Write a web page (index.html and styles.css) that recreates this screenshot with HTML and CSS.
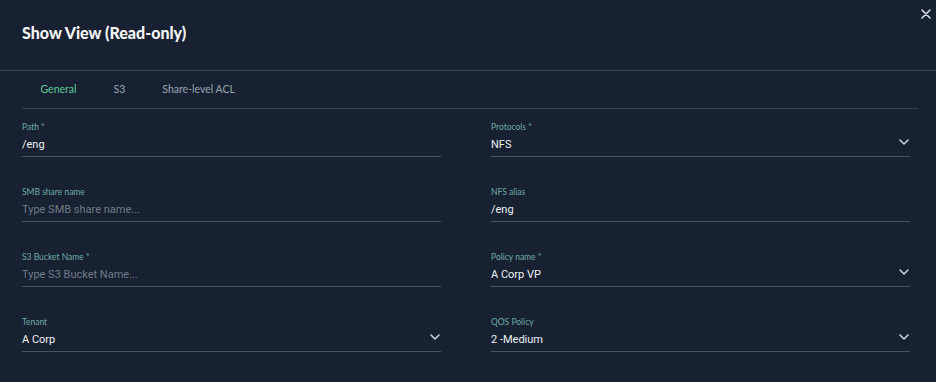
FILE: index.html
```html
<!DOCTYPE html>
<html lang="en">
<head>
    <meta charset="UTF-8">
    <meta name="viewport" content="width=device-width, initial-scale=1.0">
    <title>Show View</title>
    <link rel="stylesheet" href="styles.css">
</head>
<body>
    <div class="modal">
        <div class="modal-header">
            <h2>Show View (Read-only)</h2>
            <button class="close-btn" aria-label="Close">
                <svg width="10" height="10" viewBox="0 0 10 10"><path d="M1 1L9 9M9 1L1 9" stroke="#d6dde6" stroke-width="1.6" stroke-linecap="round"/></svg>
            </button>
        </div>

        <div class="tabs">
            <span class="tab active">General</span>
            <span class="tab">S3</span>
            <span class="tab">Share-level ACL</span>
        </div>

        <div class="form">
            <div class="field">
                <label>Path *</label>
                <div class="value">/eng</div>
            </div>
            <div class="field">
                <label>Protocols *</label>
                <div class="value select">NFS <svg class="chev" viewBox="0 0 10 6"><path d="M1 1L5 5L9 1" fill="none" stroke="#c9d1db" stroke-width="1.6" stroke-linecap="round" stroke-linejoin="round"/></svg></div>
            </div>
            <div class="field">
                <label>SMB share name</label>
                <div class="value placeholder">Type SMB share name...</div>
            </div>
            <div class="field">
                <label>NFS alias</label>
                <div class="value">/eng</div>
            </div>
            <div class="field">
                <label>S3 Bucket Name *</label>
                <div class="value placeholder">Type S3 Bucket Name...</div>
            </div>
            <div class="field">
                <label>Policy name *</label>
                <div class="value select">A Corp VP <svg class="chev" viewBox="0 0 10 6"><path d="M1 1L5 5L9 1" fill="none" stroke="#c9d1db" stroke-width="1.6" stroke-linecap="round" stroke-linejoin="round"/></svg></div>
            </div>
            <div class="field">
                <label>Tenant</label>
                <div class="value select">A Corp <svg class="chev" viewBox="0 0 10 6"><path d="M1 1L5 5L9 1" fill="none" stroke="#c9d1db" stroke-width="1.6" stroke-linecap="round" stroke-linejoin="round"/></svg></div>
            </div>
            <div class="field">
                <label>QOS Policy</label>
                <div class="value select">2 -Medium <svg class="chev" viewBox="0 0 10 6"><path d="M1 1L5 5L9 1" fill="none" stroke="#c9d1db" stroke-width="1.6" stroke-linecap="round" stroke-linejoin="round"/></svg></div>
            </div>
        </div>
    </div>
</body>
</html>
```

FILE: styles.css
```css
body {
    margin: 0;
    background: #172131;
    font-family: Lato, "Open Sans", sans-serif;
    color: #e8edf2;
    overflow: hidden;
}
.modal {
    width: 936px;
    height: 382px;
    background: #172131;
}
.modal-header {
    position: relative;
    height: 70px;
    padding: 0 22px;
    border-bottom: 1px solid #394555;
}
.modal-header h2 {
    margin: 0;
    padding-top: 23px;
    font-size: 16px;
    line-height: 20px;
    font-weight: 900;
    color: #f4f6f8;
}
.close-btn {
    position: absolute;
    top: 8px;
    right: 4px;
    width: 12px;
    height: 12px;
    padding: 0;
    border: none;
    background: none;
    display: flex;
    align-items: center;
    justify-content: center;
}
.tabs {
    display: flex;
    height: 38px;
    align-items: center;
    margin: 0 18px 0 22px;
    border-bottom: 1px solid #394555;
    padding-bottom: 1px;
    box-sizing: border-box;
}
.tab {
    padding: 0 18.5px;
    font-size: 10.5px;
    color: #9aa5b2;
}
.tab.active {
    color: #5ec99c;
}
.form {
    display: grid;
    grid-template-columns: 419px 419px;
    column-gap: 50px;
    row-gap: 30px;
    padding: 13px 26px 0 22px;
}
.field label {
    display: block;
    font-size: 8.5px;
    line-height: 10px;
    color: #70aba8;
    margin-bottom: 6px;
}
.field .value {
    display: flex;
    align-items: center;
    justify-content: space-between;
    font-family: Roboto, "Liberation Sans", sans-serif;
    font-size: 11px;
    line-height: 13px;
    color: #eef1f4;
    padding-bottom: 5px;
    border-bottom: 1px solid #465262;
}
.field .placeholder {
    color: #707b88;
}
.chev {
    width: 10px;
    height: 6px;
    margin-right: 1px;
    margin-top: -6px;
}
```
